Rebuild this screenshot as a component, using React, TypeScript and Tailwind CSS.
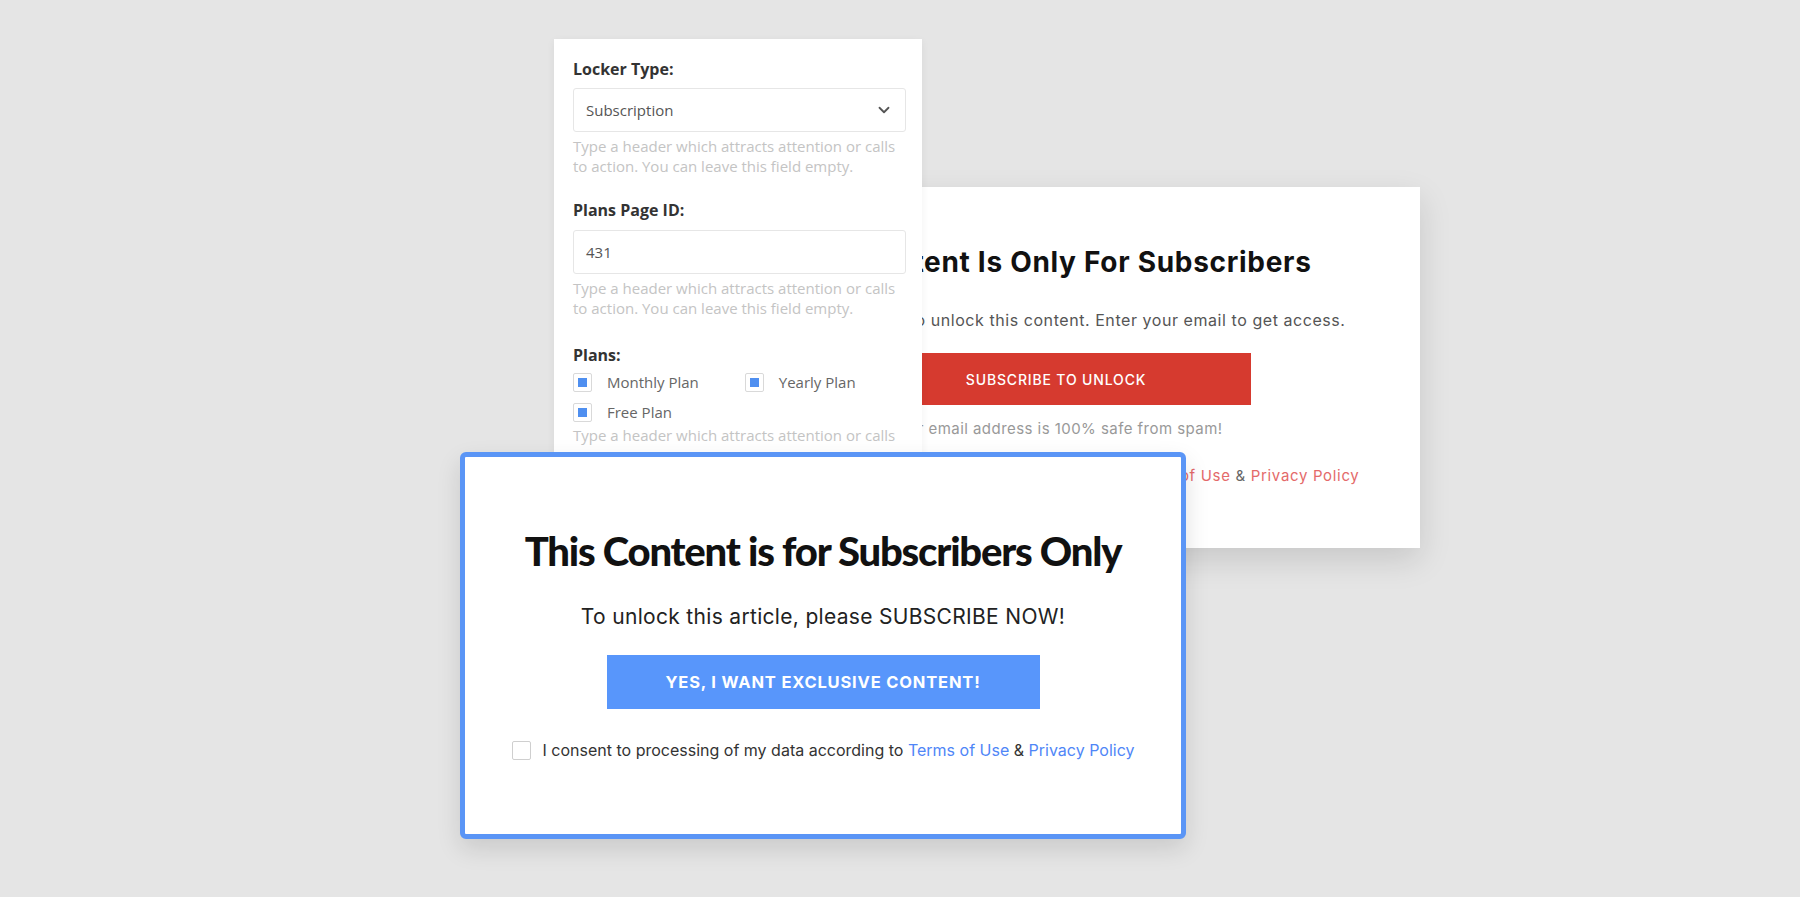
import { ChevronDown } from 'lucide-react';

const PANEL_FONT = { fontFamily: '"Open Sans", "Noto Sans", sans-serif' };
const WORK_FONT = { fontFamily: '"Inter", "Liberation Sans", sans-serif' };

function Helper({ children }: { children: React.ReactNode }) {
  return <p className="mt-1 text-[15px] leading-5 text-[#c4c4c4]">{children}</p>;
}

function Check({ label }: { label: string }) {
  return (
    <label className="flex h-[26px] items-center gap-[15px] text-[15px] text-[#666]">
      <span className="flex h-[19px] w-[19px] items-center justify-center rounded-[2px] border border-[#d9d9d9] bg-white">
        <span className="h-[9px] w-[9px] bg-[#4f8ff0]" />
      </span>
      {label}
    </label>
  );
}

function SettingsPanel() {
  return (
    <div
      className="absolute left-[554px] top-[39px] h-[430px] w-[368px] bg-white pl-[19px] pr-4 pt-[18px] shadow-[0_2px_8px_rgba(0,0,0,0.06)]"
      style={PANEL_FONT}
    >
      <div className="text-[16px] font-bold leading-6 text-[#333]">Locker Type:</div>
      <div className="mt-[7px] flex h-[44px] items-center justify-between rounded-[3px] border border-[#e6e6e6] px-3 text-[15px] text-[#555]">
        Subscription
        <ChevronDown size={18} strokeWidth={2.4} className="text-[#555]" />
      </div>
      <Helper>Type a header which attracts attention or calls to action. You can leave this field empty.</Helper>

      <div className="mt-[22px] text-[16px] font-bold leading-6 text-[#333]">Plans Page ID:</div>
      <div className="mt-2 flex h-[44px] items-center rounded-[3px] border border-[#e6e6e6] px-3 text-[15px] text-[#555]">
        431
      </div>
      <Helper>Type a header which attracts attention or calls to action. You can leave this field empty.</Helper>

      <div className="mt-[25px] text-[16px] font-bold leading-6 text-[#333]">Plans:</div>
      <div className="mt-[2px] flex flex-col gap-1">
        <div className="flex gap-[46px]">
          <Check label="Monthly Plan" />
          <Check label="Yearly Plan" />
        </div>
        <Check label="Free Plan" />
      </div>
      <p className="text-[15px] leading-5 text-[#c4c4c4]">Type a header which attracts attention or calls</p>
    </div>
  );
}

function RedLocker() {
  return (
    <div
      className="absolute left-[692px] top-[187px] flex h-[361px] w-[728px] flex-col items-center bg-white pt-[55px] shadow-[0_12px_30px_rgba(0,0,0,0.13)]"
      style={WORK_FONT}
    >
      <h2 className="mr-[14px] text-[28px] font-bold leading-[40px] tracking-[0.025em] text-[#111]">
        This Content Is Only For Subscribers
      </h2>
      <p className="mt-[26px] text-[16px] leading-6 tracking-[0.035em] text-[#555]">
        Please subscribe to unlock this content. Enter your email to get access.
      </p>
      <button className="mt-[21px] h-[52px] w-[390px] bg-[#d63a2f] text-[14px] font-medium tracking-[0.06em] text-white">
        SUBSCRIBE TO UNLOCK
      </button>
      <p className="mt-[12px] text-[15px] leading-6 tracking-[0.03em] text-[#999]">
        Your email address is 100% safe from spam!
      </p>
      <p className="mt-[23px] text-[15px] leading-6 tracking-[0.045em] text-[#666]">
        I consent to processing of my data according to <span className="text-[#e46a6a]">Terms of Use</span> &amp;{' '}
        <span className="text-[#e46a6a]">Privacy Policy</span>
      </p>
    </div>
  );
}

function BlueLocker() {
  return (
    <div
      className="absolute left-[460px] top-[452px] flex h-[387px] w-[726px] flex-col items-center rounded-[6px] border-[5px] border-[#5a95f6] bg-white pt-[72px] shadow-[0_10px_24px_rgba(0,0,0,0.12)]"
      style={{ fontFamily: '"Inter", "Open Sans", sans-serif' }}
    >
      <h1
        className="text-[40px] font-black leading-[44px] tracking-[-0.03em] text-[#111]"
        style={{ fontFamily: 'Lato, "Open Sans", sans-serif' }}
      >
        This Content is for Subscribers Only
      </h1>
      <p className="mt-[32px] text-[21px] leading-6 tracking-[0.015em] text-[#222]">
        To unlock this article, please SUBSCRIBE NOW!
      </p>
      <button className="mt-[26px] h-[54px] w-[433px] bg-[#5896fb] text-[16.5px] font-bold tracking-[0.05em] text-white">
        YES, I WANT EXCLUSIVE CONTENT!
      </button>
      <label className="mt-[29px] flex items-center gap-3 text-[16px] text-[#333]">
        <span className="h-[19px] w-[19px] rounded-[2px] border border-[#cfcfcf] bg-white" />
        <span>
          I consent to processing of my data according to <span className="text-[#4f86f7]">Terms of Use</span> &amp;{' '}
          <span className="text-[#4f86f7]">Privacy Policy</span>
        </span>
      </label>
    </div>
  );
}

export default function App() {
  return (
    <div className="relative h-[897px] w-full overflow-hidden bg-[#e5e5e5]">
      <RedLocker />
      <SettingsPanel />
      <BlueLocker />
    </div>
  );
}
